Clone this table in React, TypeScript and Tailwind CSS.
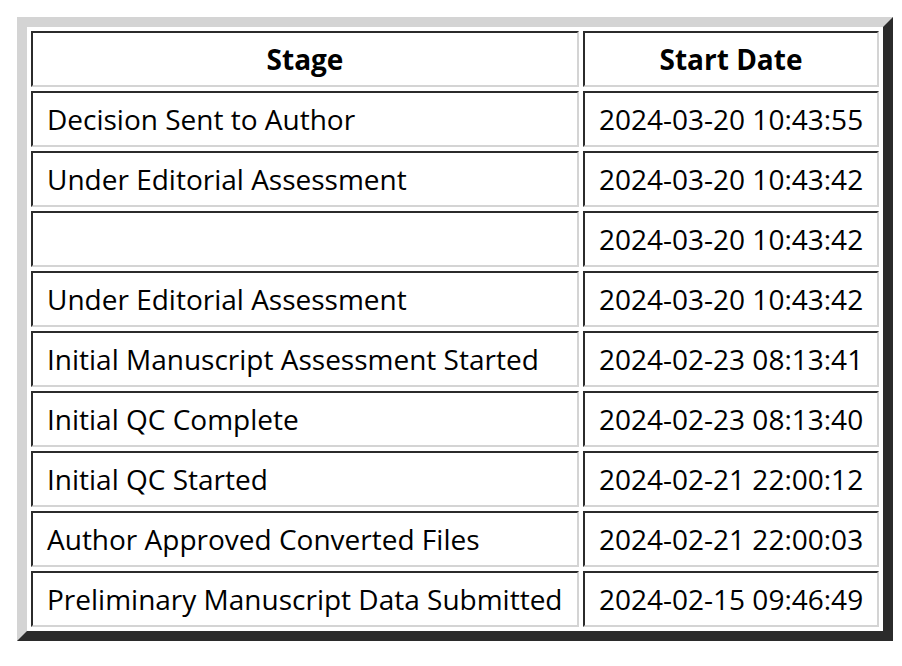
const rows: [string, string][] = [
  ["Decision Sent to Author", "2024-03-20 10:43:55"],
  ["Under Editorial Assessment", "2024-03-20 10:43:42"],
  ["", "2024-03-20 10:43:42"],
  ["Under Editorial Assessment", "2024-03-20 10:43:42"],
  ["Initial Manuscript Assessment Started", "2024-02-23 08:13:41"],
  ["Initial QC Complete", "2024-02-23 08:13:40"],
  ["Initial QC Started", "2024-02-21 22:00:12"],
  ["Author Approved Converted Files", "2024-02-21 22:00:03"],
  ["Preliminary Manuscript Data Submitted", "2024-02-15 09:46:49"],
];

const cell =
  "border-2 border-solid border-t-[#2b2b2b] border-l-[#2b2b2b] border-r-[#d4d4d4] border-b-[#d4d4d4] px-[14px] py-[7px] leading-[38px] whitespace-nowrap";

export default function App() {
  return (
    <div className="min-h-screen bg-white pl-[17px] pt-[17px] font-['Open_Sans',sans-serif] text-[28px] text-black">
      <table className="table-fixed w-[876px] border-separate border-spacing-[4px] border-[10px] border-solid border-t-[#d4d4d4] border-l-[#d4d4d4] border-r-[#2b2b2b] border-b-[#2b2b2b]">
        <thead>
          <tr>
            <th className={`${cell} w-[548px] text-center font-bold`}>Stage</th>
            <th className={`${cell} text-center font-bold`}>Start Date</th>
          </tr>
        </thead>
        <tbody>
          {rows.map(([stage, date], i) => (
            <tr key={i}>
              <td className={`${cell} text-left`}>{stage}</td>
              <td className={`${cell} text-left`}>{date}</td>
            </tr>
          ))}
        </tbody>
      </table>
    </div>
  );
}
